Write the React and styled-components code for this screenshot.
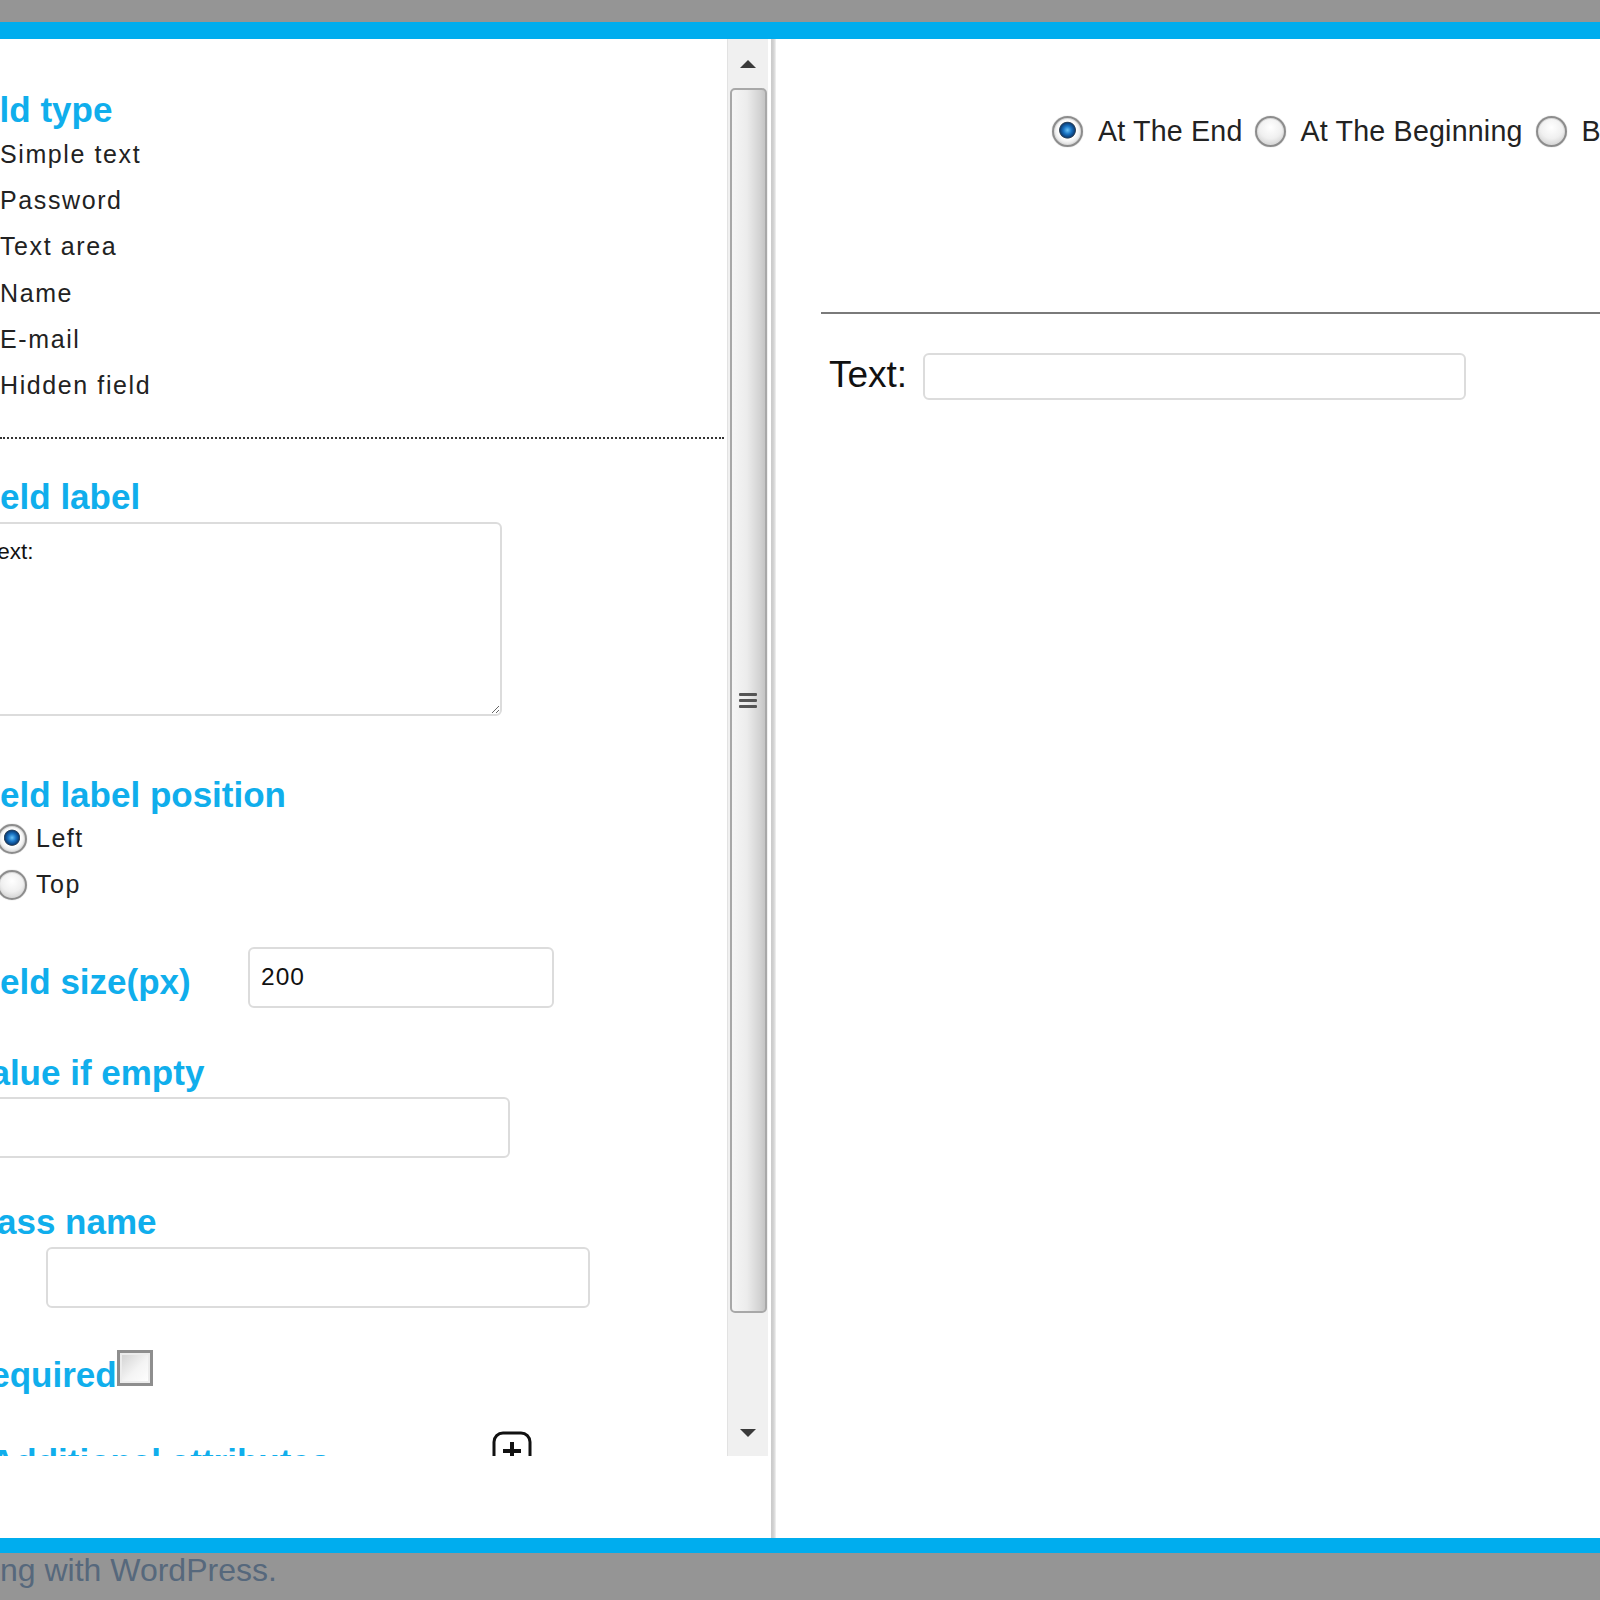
import React from "react";
import styled, { createGlobalStyle } from "styled-components";

const GlobalStyle = createGlobalStyle`
  body {
    margin: 0;
    font-family: "Liberation Sans", Arial, sans-serif;
    background: #ffffff;
  }
`;

const Page = styled.div`
  width: 1600px;
  height: 1600px;
  display: flex;
  flex-direction: column;
  overflow: hidden;
`;

const GrayBar = styled.div`
  height: ${(p) => p.h}px;
  background: #959595;
  flex-shrink: 0;
`;

const BlueBar = styled.div`
  height: ${(p) => p.h}px;
  background: #00adee;
  flex-shrink: 0;
`;

const Main = styled.div`
  height: 1499px;
  flex-shrink: 0;
  display: flex;
  background: #ffffff;
`;

const LeftPane = styled.div`
  width: 768px;
  flex-shrink: 0;
  display: flex;
  flex-direction: column;
`;

const ScrollArea = styled.div`
  height: 1417px;
  display: flex;
`;

const Content = styled.div`
  width: 727px;
  overflow: hidden;
  padding-top: 50px;
  box-sizing: border-box;
`;

const Heading = styled.div`
  font-size: 35px;
  line-height: 42px;
  font-weight: bold;
  color: #10aeec;
  white-space: nowrap;
  flex-shrink: 0;
  margin-left: ${(p) => -p.offset}px;
  margin-top: ${(p) => p.top || 0}px;
  width: ${(p) => (p.w ? `${p.w}px` : "auto")};
`;

const OptionList = styled.div`
  display: flex;
  flex-direction: column;
`;

const Option = styled.div`
  height: 46.3px;
  display: flex;
  align-items: center;
  font-size: 25px;
  letter-spacing: 1.6px;
  color: #222;
`;

const DottedRule = styled.div`
  margin-top: 28px;
  width: 724px;
  border-top: 2px dotted #333;
`;

const LabelArea = styled.textarea`
  display: block;
  margin: 4px 0 0 -23px;
  width: 525px;
  height: 194px;
  box-sizing: border-box;
  padding: 15px 7px;
  border: 2px solid #dcdcdc;
  border-radius: 6px;
  font-family: "Liberation Sans", Arial, sans-serif;
  font-size: 22.5px;
  color: #111;
  resize: both;
  outline: none;
`;

const RadioRow = styled.label`
  display: flex;
  align-items: center;
  gap: ${(p) => p.gap || 9}px;
  height: ${(p) => p.h || 46}px;
  margin-left: ${(p) => p.ml || 0}px;
  font-size: ${(p) => p.size || 25}px;
  letter-spacing: ${(p) => p.spacing ?? 1.5}px;
  color: #222;
  white-space: nowrap;
  flex-shrink: 0;
`;

const Radio = styled.span`
  width: ${(p) => p.d}px;
  height: ${(p) => p.d}px;
  margin-left: ${(p) => p.ml || 0}px;
  border-radius: 50%;
  box-sizing: border-box;
  flex-shrink: 0;
  border: 2px solid #8c8c8c;
  background: ${(p) =>
    p.checked
      ? "radial-gradient(circle at 50% 45%, #6cc4f7 0, #1a74c4 20%, #0c3f78 36%, #3a4a5a 40%, #ffffff 44%, #f4f4f4 56%, #bdbdbd 100%)"
      : "radial-gradient(circle at 50% 35%, #ffffff 0, #f0f0f0 50%, #c4c4c4 100%)"};
  box-shadow: inset 0 0 0 1px #dadada, 0 0 1px #999;
`;

const FieldRow = styled.div`
  display: flex;
  align-items: ${(p) => p.align || "center"};
  margin-top: ${(p) => p.top}px;
`;

const TextBox = styled.input`
  display: block;
  box-sizing: border-box;
  flex-shrink: 0;
  width: ${(p) => p.w}px;
  height: ${(p) => p.h || 61}px;
  margin-left: ${(p) => p.ml || 0}px;
  margin-top: ${(p) => p.top || 0}px;
  border: 2px solid #dcdcdc;
  border-radius: 6px;
  padding: 0 11px;
  font-family: "Liberation Sans", Arial, sans-serif;
  font-size: 24.5px;
  letter-spacing: 1px;
  color: #111;
  outline: none;
  background: #fff;
`;

const CheckBox = styled.span`
  display: inline-block;
  flex-shrink: 0;
  width: 36px;
  height: 36px;
  box-sizing: border-box;
  border: 3px solid #8e8e8e;
  margin-top: -4px;
  background: linear-gradient(135deg, #d0d0d0 0%, #f4f4f4 55%, #ffffff 100%);
  box-shadow: inset 0 0 0 2px #ececec;
`;

const AddIcon = styled.svg`
  flex-shrink: 0;
`;

const Scrollbar = styled.div`
  width: 41px;
  flex-shrink: 0;
  background: #f0f0f0;
  border-left: 1px solid #e2e2e2;
  box-sizing: border-box;
  display: flex;
  flex-direction: column;
  align-items: center;
`;

const ArrowButton = styled.div`
  height: ${(p) => p.h}px;
  width: 100%;
  flex-shrink: 0;
  display: flex;
  align-items: ${(p) => (p.bottom ? "flex-end" : "center")};
  justify-content: center;
  padding-bottom: ${(p) => (p.bottom ? 18 : 0)}px;
  box-sizing: border-box;
`;

const Thumb = styled.div`
  width: 37px;
  height: 1225px;
  flex-shrink: 0;
  box-sizing: border-box;
  border: 2px solid #a8a8a8;
  border-radius: 5px;
  background: linear-gradient(90deg, #f6f6f6 0%, #ececec 45%, #d2d2d2 85%, #c4c4c4 100%);
  display: flex;
  align-items: center;
  justify-content: center;
`;

const Grip = styled.div`
  display: flex;
  flex-direction: column;
  gap: 3px;
  & > span {
    display: block;
    width: 18px;
    height: 3px;
    background: #555;
    border-radius: 1px;
  }
`;

const Divider = styled.div`
  width: 8px;
  flex-shrink: 0;
  background: linear-gradient(90deg, #ffffff 0%, #ffffff 38%, #c9c9c9 44%, #d6d6d6 75%, #f3f3f3 100%);
`;

const RightPane = styled.div`
  flex: 1;
  min-width: 0;
  overflow: hidden;
  display: flex;
  flex-direction: column;
`;

const PositionRow = styled.div`
  display: flex;
  align-items: center;
  padding-left: 276px;
  margin-top: 72px;
  height: 41px;
`;

const Rule = styled.div`
  margin: 160px 0 0 45px;
  border-top: 2px solid #7a7a7a;
`;

const PreviewRow = styled.div`
  display: flex;
  align-items: center;
  gap: 16px;
  margin: 39px 0 0 53px;
`;

const PreviewLabel = styled.span`
  font-size: 37px;
  color: #111;
  margin-top: -4px;
`;

const Footer = styled.div`
  flex: 1;
  background: #959595;
  color: #56687c;
  font-size: 32px;
  line-height: 34px;
  white-space: nowrap;
`;

const fieldTypes = ["Simple text", "Password", "Text area", "Name", "E-mail", "Hidden field"];

export default function App() {
  return (
    <Page>
      <GlobalStyle />
      <GrayBar h={22} />
      <BlueBar h={17} />
      <Main>
        <LeftPane>
          <ScrollArea>
            <Content>
              <Heading offset={51}>Field type</Heading>
              <OptionList>
                {fieldTypes.map((t) => (
                  <Option key={t}>{t}</Option>
                ))}
              </OptionList>
              <DottedRule />

              <Heading offset={31} top={37}>Field label</Heading>
              <LabelArea defaultValue="Text:" />

              <Heading offset={31} top={58}>Field label position</Heading>
              <RadioRow>
                <Radio d={30} ml={-3} checked />
                Left
              </RadioRow>
              <RadioRow>
                <Radio d={30} ml={-3} />
                Top
              </RadioRow>

              <FieldRow top={39}>
                <Heading offset={31} w={279} top={10}>Field size(px)</Heading>
                <TextBox w={306} defaultValue="200" />
              </FieldRow>

              <Heading offset={31} top={44}>Value if empty</Heading>
              <TextBox w={530} ml={-20} top={3} />

              <Heading offset={38} top={43}>Class name</Heading>
              <TextBox w={544} ml={46} top={4} />

              <FieldRow top={46} align="flex-start">
                <Heading offset={35}>Required</Heading>
                <CheckBox />
              </FieldRow>

              <FieldRow top={35} align="flex-start">
                <Heading offset={10} w={502} top={10}>Additional attributes</Heading>
                <AddIcon width="40" height="40" viewBox="0 0 40 40">
                  <rect x="2" y="2" width="36" height="36" rx="9" fill="#fff" stroke="#111" strokeWidth="3" />
                  <path d="M20 11v18M11 20h18" stroke="#111" strokeWidth="4" />
                </AddIcon>
              </FieldRow>
            </Content>
            <Scrollbar>
              <ArrowButton h={49}>
                <svg width="18" height="10" viewBox="0 0 18 10">
                  <path d="M9 1L17 9H1z" fill="#3a3a3a" />
                </svg>
              </ArrowButton>
              <Thumb>
                <Grip>
                  <span />
                  <span />
                  <span />
                </Grip>
              </Thumb>
              <ArrowButton h={143} bottom>
                <svg width="18" height="10" viewBox="0 0 18 10">
                  <path d="M1 1H17L9 9z" fill="#3a3a3a" />
                </svg>
              </ArrowButton>
            </Scrollbar>
          </ScrollArea>
        </LeftPane>
        <Divider />
        <RightPane>
          <PositionRow>
            <RadioRow size={28.6} spacing={0.2} gap={15} h={41}>
              <Radio d={31} checked />
              At The End
            </RadioRow>
            <RadioRow size={28.6} spacing={0.2} gap={15} h={41} ml={12}>
              <Radio d={31} />
              At The Beginning
            </RadioRow>
            <RadioRow size={28.6} spacing={0.2} gap={15} h={41} ml={13}>
              <Radio d={31} />
              Before
            </RadioRow>
          </PositionRow>
          <Rule />
          <PreviewRow>
            <PreviewLabel>Text:</PreviewLabel>
            <TextBox w={543} h={47} />
          </PreviewRow>
        </RightPane>
      </Main>
      <BlueBar h={15} />
      <Footer>ng with WordPress.</Footer>
    </Page>
  );
}
